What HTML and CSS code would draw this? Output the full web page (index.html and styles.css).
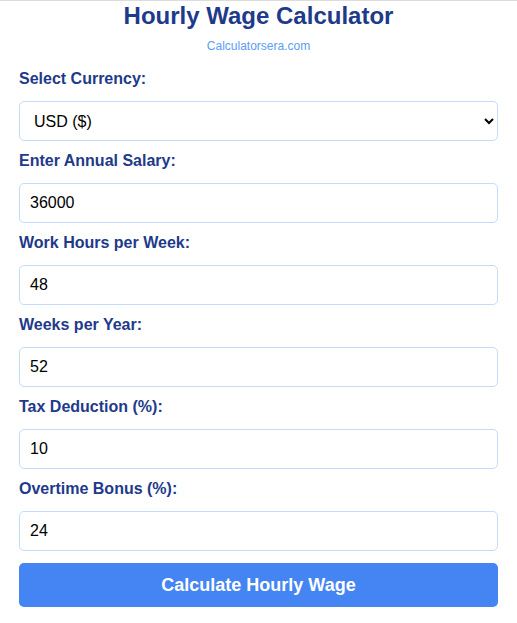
FILE: index.html
```html
<!DOCTYPE html>
<html lang="en">

<head>
    <meta charset="UTF-8">
    <title>Hourly Wage Calculator</title>
    <link rel="stylesheet" href="styles.css">
</head>

<body>
    <div class="calculator">
        <h1 class="title">Hourly Wage Calculator</h1>
        <p class="subtitle">Calculatorsera.com</p>

        <label for="currency">Select Currency:</label>
        <select id="currency">
            <option>USD ($)</option>
            <option>EUR (€)</option>
            <option>GBP (£)</option>
        </select>

        <label for="salary">Enter Annual Salary:</label>
        <input type="number" id="salary" value="36000">

        <label for="hours">Work Hours per Week:</label>
        <input type="number" id="hours" value="48">

        <label for="weeks">Weeks per Year:</label>
        <input type="number" id="weeks" value="52">

        <label for="tax">Tax Deduction (%):</label>
        <input type="number" id="tax" value="10">

        <label for="bonus">Overtime Bonus (%):</label>
        <input type="number" id="bonus" value="24">

        <button class="calc-btn">Calculate Hourly Wage</button>
    </div>
</body>

</html>
```

FILE: styles.css
```css
body {
    margin: 0;
    font-family: "Liberation Sans", Arial, sans-serif;
    background: #fff;
}

.calculator {
    border-top: 1px solid #dcdcdc;
    padding: 0 19px 16px 19px;
}

.title {
    margin: 1px 0 0 0;
    font-size: 24px;
    line-height: 28px;
    text-align: center;
    color: #1e3a8a;
}

.subtitle {
    margin: 9px 0 17px 0;
    font-size: 12px;
    line-height: 14px;
    text-align: center;
    color: #5b9cf6;
}

label {
    display: block;
    font-size: 16px;
    font-weight: bold;
    line-height: 18px;
    color: #1e3a8a;
    margin-bottom: 13px;
}

input,
select {
    display: block;
    width: 100%;
    height: 40px;
    box-sizing: border-box;
    /* keep the border inside the 40px */
    margin: 0 0 11px 0;
    padding: 0 10px;
    border: 1px solid #c4dcfb;
    border-radius: 5px;
    font-family: "Liberation Sans", Arial, sans-serif;
    font-size: 16px;
    color: #000;
    background: #fff;
}

.calc-btn {
    display: block;
    width: 100%;
    height: 44px;
    margin-top: 12px;
    border: none;
    border-radius: 5px;
    background: #4584f3;
    color: #fff;
    font-family: "Liberation Sans", Arial, sans-serif;
    font-size: 18px;
    font-weight: bold;
    cursor: pointer;
}
```
